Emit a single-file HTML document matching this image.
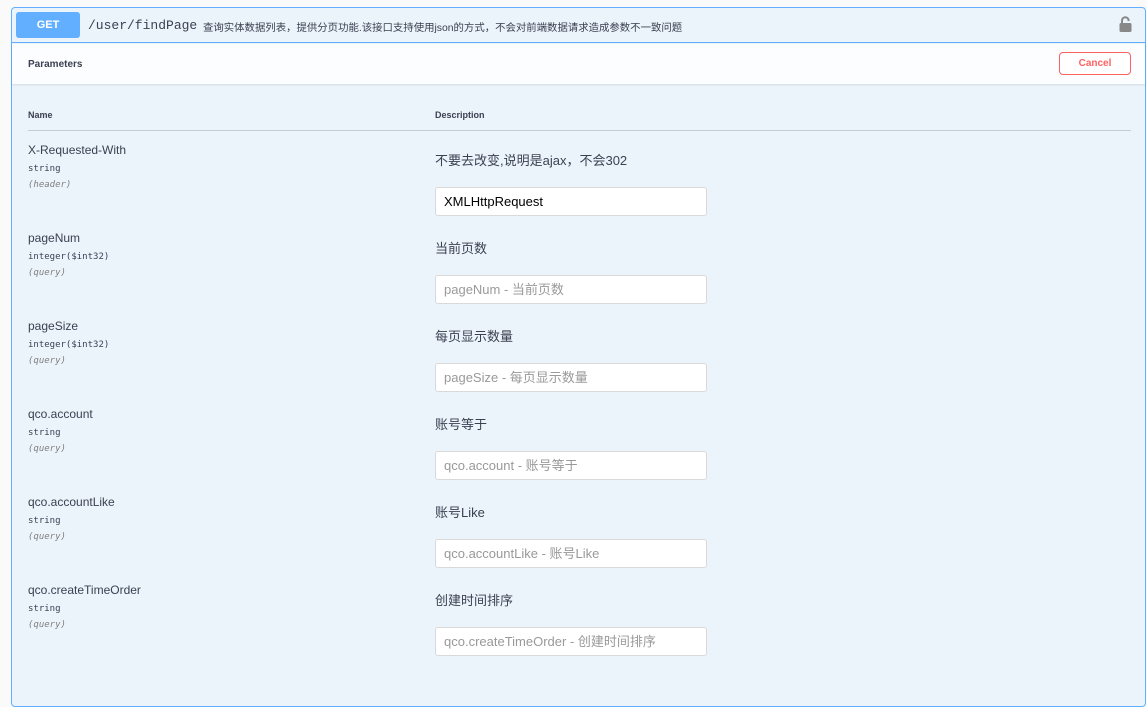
<!DOCTYPE html>
<html><head><meta charset="utf-8"><style>
*{box-sizing:border-box;margin:0;padding:0}
body{width:1147px;height:689px;overflow:hidden;background:#fafafa;font-family:"Liberation Sans","Noto Sans CJK SC",sans-serif;position:relative}
.box{position:absolute;left:11px;top:7px;width:1135px;height:700px;border:1px solid #61affe;border-radius:4px;background:#ebf3fb}
.hdr{position:absolute;left:0;top:0;width:100%;height:35px;border-bottom:1px solid #61affe}
.get{position:absolute;left:4px;top:4px;width:64px;height:26px;background:#61affe;border-radius:3px;color:#fff;font-weight:bold;font-size:11px;text-align:center;line-height:26px}
.path{position:absolute;left:76px;top:10px;font-family:"Liberation Mono",monospace;font-size:13px;color:#3b4151}
.sum{position:absolute;left:191px;top:11px;font-size:10.4px;color:#3b4151}
.lock{position:absolute;right:13px;top:8px}
.params{position:absolute;left:0;top:36px;width:100%;height:40px;background:#fcfdfe;box-shadow:0 1px 2px rgba(0,0,0,.1)}
.params b{position:absolute;left:16px;top:15px;font-size:10px;color:#3b4151}
.cancel{position:absolute;right:14px;top:8px;width:72px;height:23px;border:1px solid #ff6060;border-radius:4px;color:#ff6060;font-size:10px;font-weight:bold;text-align:center;line-height:21px;background:#fff}
.th{position:absolute;top:102px;font-size:9px;font-weight:bold;color:#3b4151}
.line{position:absolute;left:16px;top:122px;width:1103px;height:1px;background:#c6ccd6}
.nm{position:absolute;left:16px;font-size:12px;color:#3b4151}
.ty{position:absolute;left:16px;font-family:"DejaVu Sans Mono",monospace;font-size:9px;color:#3b4151}
.in{position:absolute;left:16px;font-family:"DejaVu Sans Mono",monospace;font-size:9px;font-style:italic;color:#808080}
.ds{position:absolute;left:423px;font-size:13px;color:#3b4151;margin-top:-3px}
.ip{position:absolute;left:423px;width:272px;height:29px;background:#fff;border:1px solid #d9d9d9;border-radius:3px;font-size:13px;line-height:27px;padding-left:8px;color:#999}
</style></head><body>
<div class="box">
<div class="hdr"><div class="get">GET</div><div class="path">/user/findPage</div><div class="sum">查询实体数据列表，提供分页功能.该接口支持使用json的方式，不会对前端数据请求造成参数不一致问题</div>
<svg class="lock" width="13" height="16" viewBox="0 0 13 16"><path d="M3 7V4.5a3.3 3.3 0 0 1 6.6 0V5" stroke="#888" stroke-width="2" fill="none"/><rect x="0.5" y="7" width="12" height="9" rx="1.5" fill="#888"/></svg></div>
<div class="params"><b>Parameters</b><div class="cancel">Cancel</div></div>
<div class="th" style="left:16px">Name</div><div class="th" style="left:423px">Description</div>
<div class="line"></div>
<div class="nm" style="top:135px">X-Requested-With</div><div class="ty" style="top:156px">string</div><div class="in" style="top:172px">(header)</div>
<div class="ds" style="top:145px">不要去改变,说明是ajax，不会302</div><div class="ip" style="top:179px;color:#000">XMLHttpRequest</div>
<div class="nm" style="top:223px">pageNum</div><div class="ty" style="top:244px">integer($int32)</div><div class="in" style="top:260px">(query)</div>
<div class="ds" style="top:233px">当前页数</div><div class="ip" style="top:267px">pageNum - 当前页数</div>
<div class="nm" style="top:311px">pageSize</div><div class="ty" style="top:332px">integer($int32)</div><div class="in" style="top:348px">(query)</div>
<div class="ds" style="top:321px">每页显示数量</div><div class="ip" style="top:355px">pageSize - 每页显示数量</div>
<div class="nm" style="top:399px">qco.account</div><div class="ty" style="top:420px">string</div><div class="in" style="top:436px">(query)</div>
<div class="ds" style="top:409px">账号等于</div><div class="ip" style="top:443px">qco.account - 账号等于</div>
<div class="nm" style="top:487px">qco.accountLike</div><div class="ty" style="top:508px">string</div><div class="in" style="top:524px">(query)</div>
<div class="ds" style="top:497px">账号Like</div><div class="ip" style="top:531px">qco.accountLike - 账号Like</div>
<div class="nm" style="top:575px">qco.createTimeOrder</div><div class="ty" style="top:596px">string</div><div class="in" style="top:612px">(query)</div>
<div class="ds" style="top:585px">创建时间排序</div><div class="ip" style="top:619px">qco.createTimeOrder - 创建时间排序</div>
</div>
</body></html>
